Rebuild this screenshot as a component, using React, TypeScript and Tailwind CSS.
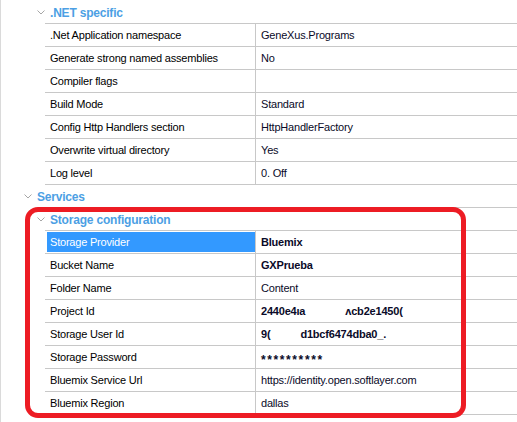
import React from "react";

type Prop = {
  label: string;
  value?: React.ReactNode;
  bold?: boolean;
  selected?: boolean;
};

const NET_PROPS: Prop[] = [
  { label: ".Net Application namespace", value: "GeneXus.Programs" },
  { label: "Generate strong named assemblies", value: "No" },
  { label: "Compiler flags", value: "" },
  { label: "Build Mode", value: "Standard" },
  { label: "Config Http Handlers section", value: "HttpHandlerFactory" },
  { label: "Overwrite virtual directory", value: "Yes" },
  { label: "Log level", value: "0. Off" },
];

const STORAGE_PROPS: Prop[] = [
  { label: "Storage Provider", value: "Bluemix", bold: true, selected: true },
  { label: "Bucket Name", value: "GXPrueba", bold: true },
  { label: "Folder Name", value: "Content" },
  {
    label: "Project Id",
    bold: true,
    value: (
      <>
        <span>2440e4ıa</span>
        <span className="ml-[40px]">ᴧcb2e1450(</span>
      </>
    ),
  },
  {
    label: "Storage User Id",
    bold: true,
    value: (
      <>
        <span>9(</span>
        <span className="ml-[30px]">d1bcf6474dba0_.</span>
      </>
    ),
  },
  {
    label: "Storage Password",
    bold: true,
    value: <span className="text-[12px] tracking-[1.6px] translate-y-[2px]">**********</span>,
  },
  { label: "Bluemix Service Url", value: "https://identity.open.softlayer.com" },
  { label: "Bluemix Region", value: "dallas" },
];

function Chevron() {
  return (
    <svg width="8" height="5" viewBox="0 0 8 5" className="shrink-0">
      <path d="M0.5 0.5 L4 4 L7.5 0.5" fill="none" stroke="#a6a6a6" strokeWidth="1" />
    </svg>
  );
}

function Category({ title, chevronX }: { title: string; chevronX: number }) {
  return (
    <div className="relative h-[23px] flex items-center">
      <div className="flex items-center" style={{ marginLeft: chevronX }}>
        <Chevron />
        <span className="ml-[5px] text-[12px] font-bold text-[#4c9fe4] tracking-[-0.2px]">{title}</span>
      </div>
      <div className="absolute bottom-0 left-[45px] right-0 h-px bg-[#c8c8c8]" />
    </div>
  );
}

function Row({ p }: { p: Prop }) {
  return (
    <div className="h-[23px] flex ml-[45px] border-b border-[#c8c8c8]">
      <div className="w-[211px] border-r border-[#c8c8c8] pl-[2px] py-px flex">
        <div
          className={`flex-1 flex items-center pl-[3px] pt-px ${
            p.selected ? "bg-[#3399ff] text-white" : "text-black"
          }`}
        >
          {p.label}
        </div>
      </div>
      <div className={`flex-1 flex items-center pl-[5px] pt-px text-[#0a0a28] ${p.bold ? "font-bold" : ""}`}>
        {p.value}
      </div>
    </div>
  );
}

export default function App() {
  return (
    <div
      className="relative w-[517px] h-[422px] bg-white overflow-hidden border-l border-[#dadada] text-[11px] tracking-[-0.2px] leading-none"
      style={{ fontFamily: '"Liberation Sans", Arial, sans-serif' }}
    >
      <div className="-ml-px pt-px">
        <Category title=".NET specific" chevronX={37} />
        {NET_PROPS.map((p) => (
          <Row key={p.label} p={p} />
        ))}
        <Category title="Services" chevronX={24} />
        <Category title="Storage configuration" chevronX={37} />
        {STORAGE_PROPS.map((p) => (
          <Row key={p.label} p={p} />
        ))}
      </div>

      {/* red annotation */}
      <div className="absolute left-[24px] top-[207px] w-[441px] h-[211px] border-[5px] border-[#ed1c24] rounded-[13px] pointer-events-none" />
    </div>
  );
}
